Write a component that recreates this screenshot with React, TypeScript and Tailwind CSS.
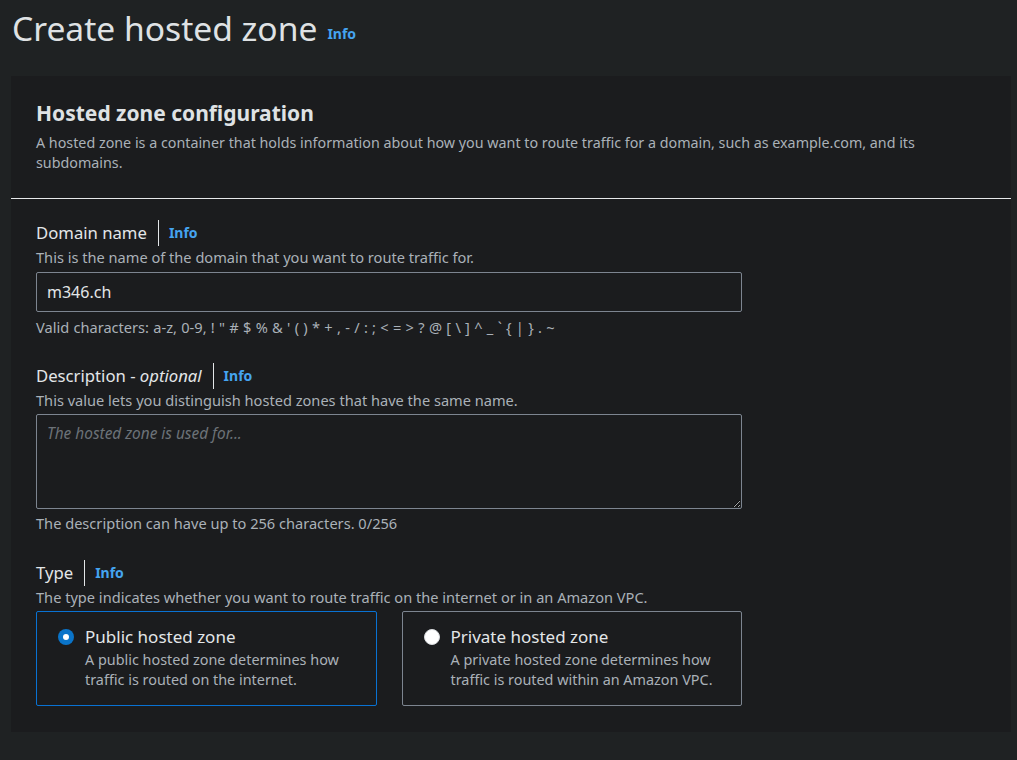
import { useState } from "react";

const font = { fontFamily: '"Noto Sans", "Open Sans", sans-serif' };

function FieldLabel({ children }: { children: React.ReactNode }) {
  return (
    <div className="flex h-[26px] items-center">
      <span className="text-[16.7px] leading-[26px] text-[#e3e6e8]">{children}</span>
      <span className="ml-[11px] h-[26px] w-px bg-[#e3e6e8]" />
      <a className="ml-[10px] text-[14px] font-bold leading-[26px] text-[#45a4f0]">Info</a>
    </div>
  );
}

function Hint({ children, spaced }: { children: React.ReactNode; spaced?: boolean }) {
  return (
    <p
      className={
        spaced
          ? "pt-px text-[14.6px] leading-[20px] text-[#aab1b8] [word-spacing:0.5px]"
          : "pt-px text-[14.6px] leading-[20px] text-[#aab1b8]"
      }
    >
      {children}
    </p>
  );
}

function TypeCard({
  title,
  body,
  checked,
  onSelect,
}: {
  title: string;
  body: string;
  checked: boolean;
  onSelect: () => void;
}) {
  return (
    <button
      type="button"
      onClick={onSelect}
      className={
        checked
          ? "flex h-[95px] items-start gap-[11px] rounded-[2px] border border-[#0972d3] pl-[21px] pr-4 pt-[12px] text-left"
          : "flex h-[95px] items-start gap-[11px] rounded-[2px] border border-[#7d8590] pl-[21px] pr-4 pt-[12px] text-left"
      }
    >
      <span className="mt-[5px] flex h-4 w-4 shrink-0 items-center justify-center">
        {checked ? (
          <span className="flex h-4 w-4 items-center justify-center rounded-full bg-[#0a74c9]">
            <span className="h-[6px] w-[6px] rounded-full bg-white" />
          </span>
        ) : (
          <span className="h-4 w-4 rounded-full border border-[#d9dcdf] bg-white" />
        )}
      </span>
      <span className="flex flex-col">
        <span className="text-[17px] leading-[26px] text-[#e3e6e8]">{title}</span>
        <span className="text-[14.4px] leading-[20px] text-[#aab1b8]">{body}</span>
      </span>
    </button>
  );
}

export default function App() {
  const [zoneType, setZoneType] = useState<"public" | "private">("public");
  const [domain, setDomain] = useState("m346.ch");
  const [description, setDescription] = useState("");

  return (
    <div className="min-h-[760px] w-[1017px] bg-[#1f2223]" style={font}>
      <div className="flex h-[76px] items-start pl-[12px] pt-[6px]">
        <h1 className="text-[33.6px] font-normal leading-[44px] text-[#dfe2e4]">Create hosted zone</h1>
        <a className="ml-[10px] mt-[18px] text-[14px] font-bold leading-[20px] text-[#45a4f0]">Info</a>
      </div>

      <section className="ml-[11px] w-[1000px] bg-[#1b1c1e]">
        <div className="border-b border-[#e6e8ea] px-[25px] pb-[25px] pt-[21px]">
          <h2 className="text-[21px] font-bold leading-[32px] text-[#dfe2e4]">
            Hosted zone configuration
          </h2>
          <p className="mt-[4px] max-w-[900px] text-[14.3px] leading-[20px] text-[#aab1b8]">
            A hosted zone is a container that holds information about how you want to route traffic for a
            domain, such as example.com, and its subdomains.
          </p>
        </div>

        <div className="flex w-[731px] flex-col px-[25px] pb-[26px] pt-[21px]">
          <FieldLabel>Domain name</FieldLabel>
          <Hint>This is the name of the domain that you want to route traffic for.</Hint>
          <input
            value={domain}
            onChange={(event) => setDomain(event.target.value)}
            className="mt-[5px] h-[40px] w-[706px] rounded-[2px] border border-[#7d8590] bg-[#1b1c1e] px-[10px] text-[16px] text-[#e3e6e8] outline-none"
          />
          <div className="mt-[4px]">
            <Hint spaced>
              Valid characters: a-z, 0-9, ! &quot; # $ % &amp; &apos; ( ) * + , - / : ; &lt; = &gt; ? @ [ \ ] ^ _ ` {"{"} | {"}"} . ~
            </Hint>
          </div>

          <div className="mt-[26px]">
            <FieldLabel>
              Description - <i>optional</i>
            </FieldLabel>
          </div>
          <Hint>This value lets you distinguish hosted zones that have the same name.</Hint>
          <textarea
            value={description}
            onChange={(event) => setDescription(event.target.value)}
            placeholder="The hosted zone is used for..."
            className="mt-[4px] h-[95px] w-[706px] resize-y rounded-[2px] border border-[#7d8590] bg-[#1b1c1e] px-[10px] py-[7px] text-[16px] leading-[24px] text-[#e3e6e8] outline-none placeholder:text-[15.4px] placeholder:italic placeholder:text-[#6c7278]"
          />
          <div className="mt-[3px]">
            <Hint>The description can have up to 256 characters. {description.length}/256</Hint>
          </div>

          <div className="mt-[27px]">
            <FieldLabel>Type</FieldLabel>
          </div>
          <Hint>The type indicates whether you want to route traffic on the internet or in an Amazon VPC.</Hint>
          <div className="mt-[4px] grid w-[706px] grid-cols-2 gap-[25px]">
            <TypeCard
              title="Public hosted zone"
              body="A public hosted zone determines how traffic is routed on the internet."
              checked={zoneType === "public"}
              onSelect={() => setZoneType("public")}
            />
            <TypeCard
              title="Private hosted zone"
              body="A private hosted zone determines how traffic is routed within an Amazon VPC."
              checked={zoneType === "private"}
              onSelect={() => setZoneType("private")}
            />
          </div>
        </div>
      </section>
    </div>
  );
}
